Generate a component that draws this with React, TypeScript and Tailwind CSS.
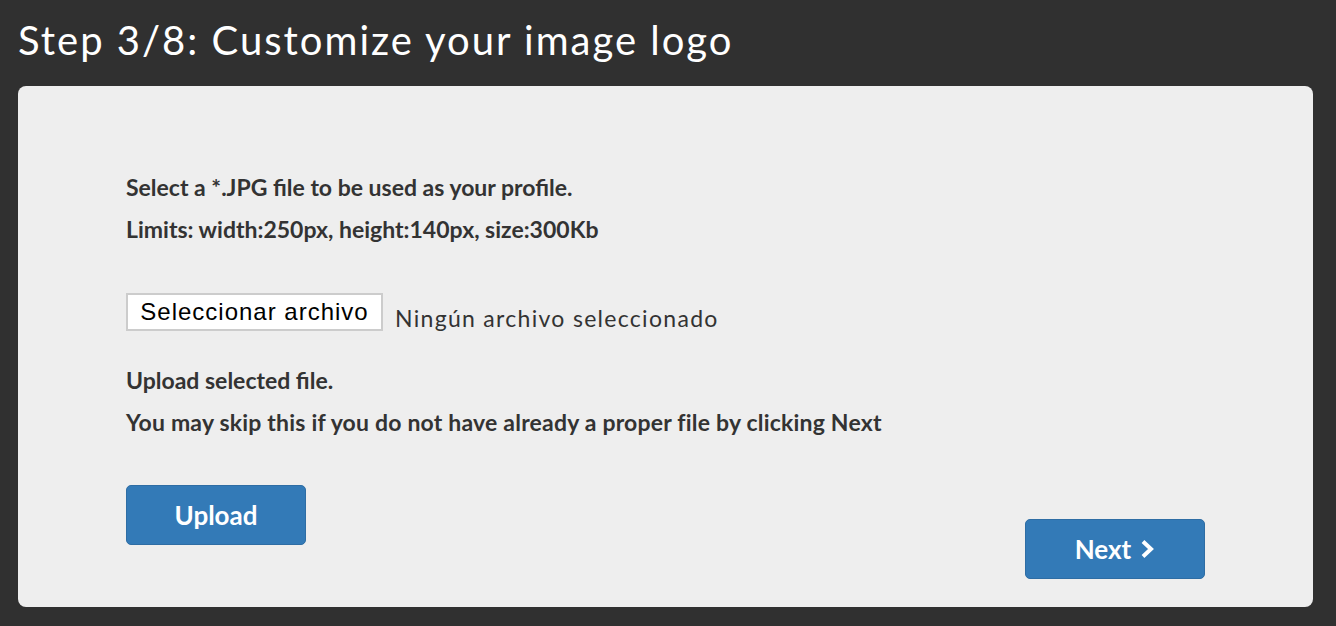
const bodyFont = "font-['Lato',sans-serif]";

function Chevron() {
  return (
    <svg width="16" height="20" viewBox="0 0 16 20" fill="none" aria-hidden="true">
      <polyline points="4,2.5 12,10 4,17.5" stroke="white" strokeWidth="4" strokeLinejoin="miter" strokeLinecap="butt" />
    </svg>
  );
}

export default function App() {
  return (
    <div className="min-h-[626px] w-full bg-[#303030] px-[18px] pb-[19px] pt-[15px]">
      <h1 className={`${bodyFont} text-[40px] leading-[50px] font-normal tracking-[2px] text-white`}>
        Step 3/8: Customize your image logo
      </h1>
      <div className="mt-[21px] h-[521px] w-[1295px] rounded-[8px] bg-[#eeeeee] pl-[108px] pr-[108px] pt-[80px]">
        <div className={`${bodyFont} text-[23px] font-bold text-[#333333]`}>
          <p className="leading-[42px]">Select a *.JPG file to be used as your profile.</p>
          <p className="leading-[42px]">Limits: width:250px, height:140px, size:300Kb</p>

          <div className="mt-[43px] flex items-start gap-[12px]">
            <span className="inline-flex h-[38px] w-[257px] items-center justify-center border-2 border-[#cccccc] bg-white font-['Liberation_Sans',sans-serif] text-[24px] font-normal tracking-[1px] text-black">
              Seleccionar archivo
            </span>
            <span className="mt-[11px] text-[23px] leading-[28px] font-normal tracking-[1.3px] text-[#333333]">
              Ningún archivo seleccionado
            </span>
          </div>

          <p className="mt-[27px] leading-[42px]">Upload selected file.</p>
          <p className="leading-[42px] tracking-[0.2px]">You may skip this if you do not have already a proper file by clicking Next</p>
        </div>

        <div className="mt-[42px] flex items-start justify-between">
          <button className={`${bodyFont} h-[60px] w-[180px] rounded-[5px] border border-[#2e6da4] bg-[#337ab7] text-[26px] font-bold text-white`}>
            Upload
          </button>
          <button className={`${bodyFont} mt-[34px] flex h-[60px] w-[180px] items-center justify-center gap-[8px] rounded-[5px] border border-[#2e6da4] bg-[#337ab7] text-[26px] font-bold text-white`}>
            Next
            <Chevron />
          </button>
        </div>
      </div>
    </div>
  );
}
